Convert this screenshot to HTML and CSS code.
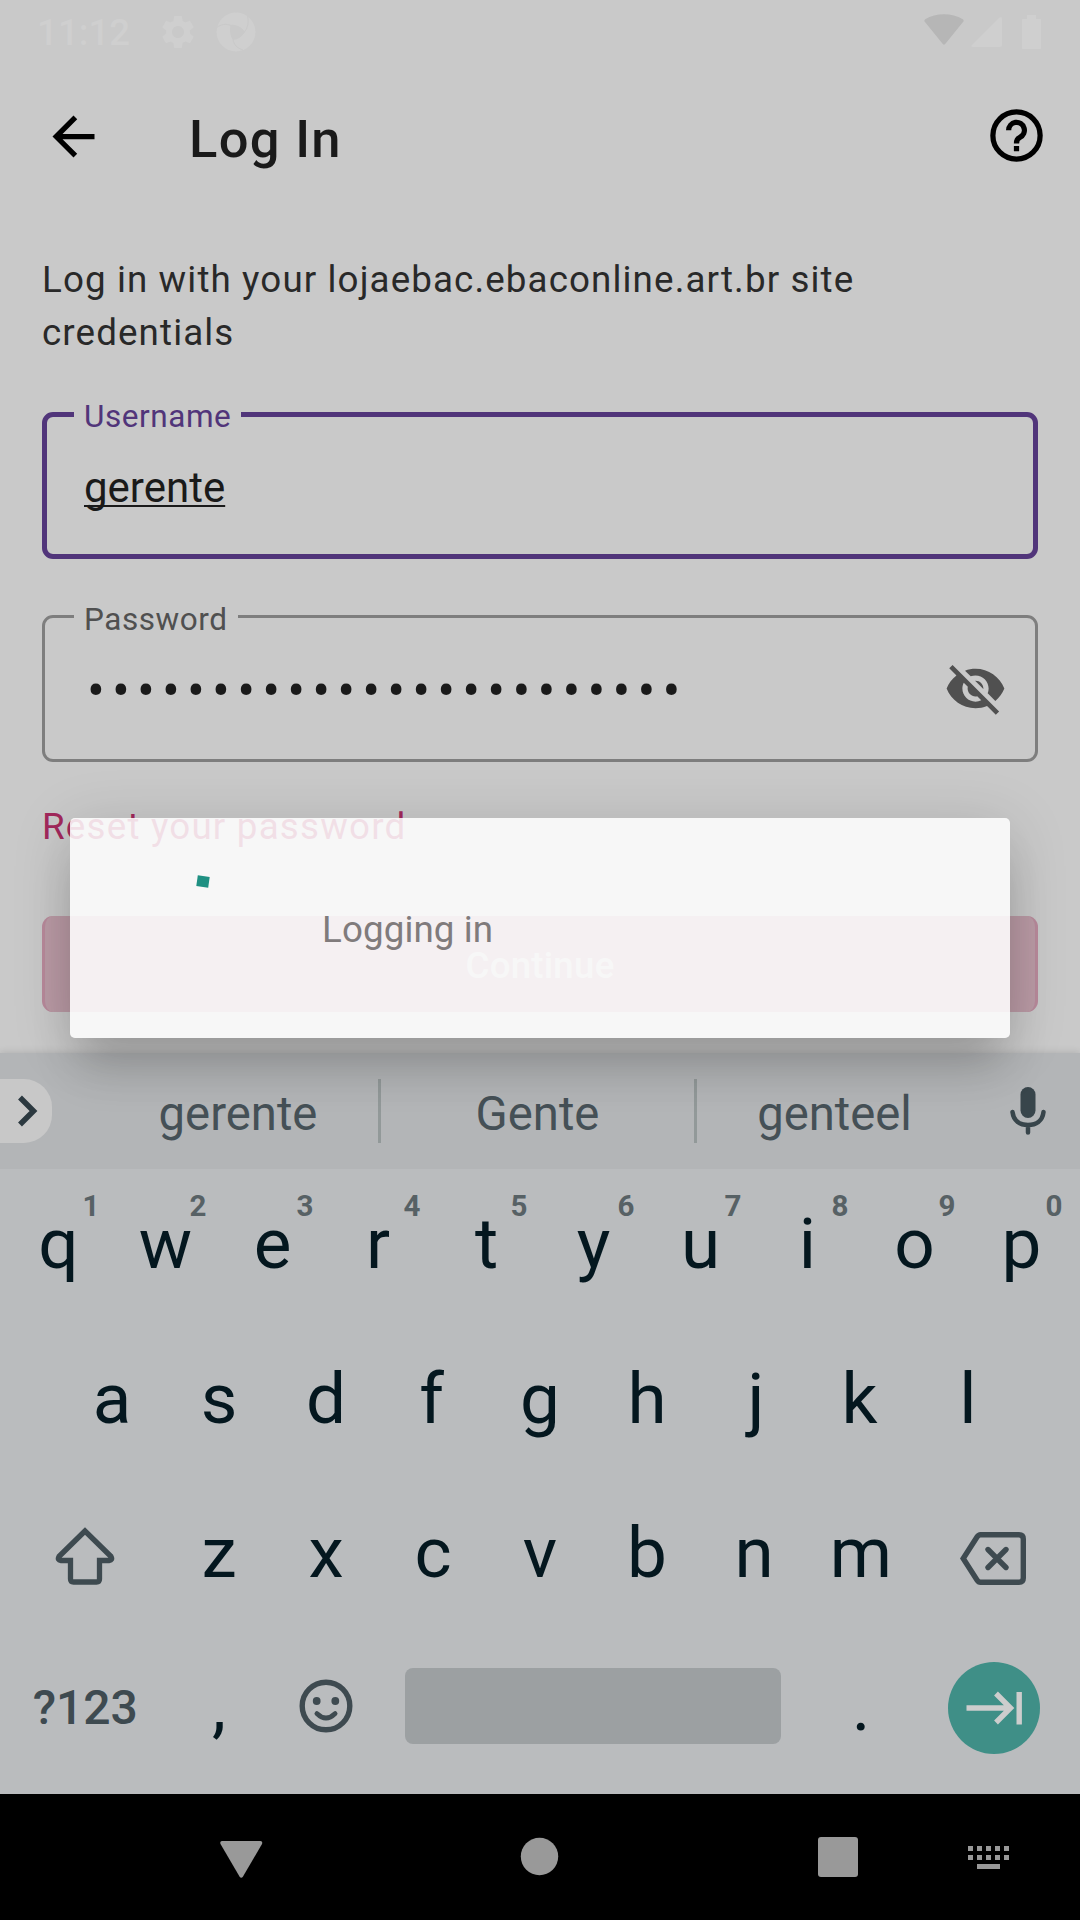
FILE: index.html
```html
<!DOCTYPE html>
<html lang="en">
<head>
<meta charset="utf-8">
<title>Log In</title>
<link rel="stylesheet" href="styles.css">
</head>
<body>
<div class="screen">
  <header class="status">
    <span class="clock">11:12</span>
    <svg class="gear" width="40" height="40" viewBox="0 0 24 24"><path fill="currentColor" d="M19.14 12.94c.04-.3.06-.61.06-.94 0-.32-.02-.64-.07-.94l2.03-1.58c.18-.14.23-.41.12-.61l-1.92-3.32c-.12-.22-.37-.29-.59-.22l-2.39.96c-.5-.38-1.03-.7-1.62-.94l-.36-2.54c-.04-.24-.24-.41-.48-.41h-3.84c-.24 0-.43.17-.47.41l-.36 2.54c-.59.24-1.13.57-1.62.94l-2.39-.96c-.22-.08-.47 0-.59.22L2.74 8.87c-.12.21-.08.47.12.61l2.03 1.58c-.05.3-.09.63-.09.94s.02.64.07.94l-2.03 1.58c-.18.14-.23.41-.12.61l1.92 3.32c.12.22.37.29.59.22l2.39-.96c.5.38 1.03.7 1.62.94l.36 2.54c.05.24.24.41.48.41h3.84c.24 0 .44-.17.47-.41l.36-2.54c.59-.24 1.13-.56 1.62-.94l2.39.96c.22.08.47 0 .59-.22l1.92-3.32c.12-.22.07-.47-.12-.61l-2.01-1.58zM12 15.6c-1.98 0-3.6-1.62-3.6-3.6s1.62-3.6 3.6-3.6 3.6 1.62 3.6 3.6-1.62 3.6-3.6 3.6z"/></svg>
    <svg class="swirl" width="40" height="40" viewBox="0 0 40 40"><circle cx="20" cy="20" r="19.5" fill="currentColor"/><g fill="#c9c9c9" stroke="#c9c9c9" stroke-linejoin="round"><path d="M15 13.500C20 13 25 15 28.500 20C25 25 22 26.500 17 27.500C14.500 23 14 18 15 13.500Z"/><path fill="none" stroke-width="1" d="M0 16C5 12 10 11.500 15 13.500M31.500 4C33 10 32 15 28.500 20M27 38C21 36 18 33 17 27.500"/></g></svg>
    <svg class="wifi" width="40" height="32" viewBox="0 0 40 32"><path d="M1 8C0 7 .2 6 1.200 5.300C12 -1.500 28 -1.500 38.800 5.300C39.800 6 40 7 39 8L21.200 30Q20 31.500 18.800 30Z" fill="#b6b6b6"/></svg>
    <svg class="signal" width="32" height="32" viewBox="0 0 32 32"><path d="M1 29L28.500 1.500Q31 0 31 2.500V29Q31 31 29 31H2Q-.5 31 1 29Z" fill="currentColor"/></svg>
    <svg class="battery" width="19" height="34" viewBox="0 0 19 34"><path d="M5 0h9v4h4q1 0 1 1v28q0 1-1 1H1q-1 0-1-1V5q0-1 1-1h4z" fill="currentColor"/></svg>
  </header>

  <div class="appbar">
    <svg class="back" width="63" height="63" viewBox="0 0 24 24"><path d="M20 11H7.830l5.590-5.590L12 4l-8 8 8 8 1.410-1.410L7.830 13H20v-2z"/></svg>
    <h1 class="title">Log In</h1>
    <svg class="help" width="63" height="63" viewBox="0 0 24 24"><circle cx="12" cy="12" r="9" fill="none" stroke="#000" stroke-width="2"/><path d="M9 10a3 3 0 1 1 4.300 2.700Q12 13.300 12 15" fill="none" stroke="#000" stroke-width="2"/><path d="M11 16h2v2h-2z"/></svg>
  </div>

  <main class="form">
    <p class="intro">Log in with your lojaebac.ebaconline.art.br site<br>credentials</p>
    <div class="field focused">
      <span class="label">Username</span>
      <span class="value">gerente</span>
    </div>
    <div class="field">
      <span class="label">Password</span>
      <span class="dots">••••••••••••••••••••••••</span>
      <svg class="eye" width="63" height="63" viewBox="0 0 24 24"><path fill="#505050" d="M12 7c2.760 0 5 2.240 5 5 0 .65-.13 1.260-.36 1.830l2.920 2.920c1.510-1.260 2.700-2.890 3.430-4.750-1.730-4.390-6-7.500-11-7.500-1.400 0-2.740.25-3.980.7l2.160 2.160C10.740 7.130 11.350 7 12 7zM2 4.270l2.280 2.280.46.46C3.080 8.300 1.780 10.020 1 12c1.730 4.390 6 7.500 11 7.500 1.550 0 3.030-.3 4.380-.84l.42.42L19.730 22 21 20.730 3.270 3 2 4.270zM7.530 9.800l1.550 1.550c-.05.21-.08.43-.08.65 0 1.660 1.340 3 3 3 .22 0 .44-.03.65-.08l1.550 1.550c-.67.33-1.410.53-2.200.53-2.760 0-5-2.240-5-5 0-.79.2-1.530.53-2.200zm4.310-.78l3.150 3.150.02-.16c0-1.660-1.340-3-3-3l-.17.01z"/></svg>
    </div>
    <a class="reset">Reset your password</a>
    <div class="button">Continue</div>
  </main>

  <section class="keyboard">
    <div class="strip">
      <div class="expand"><svg width="22" height="34" viewBox="0 0 22 34"><path d="M3 3.500L16.500 17L3 30.500" fill="none" stroke="#2c3940" stroke-width="5.500"/></svg></div>
      <div class="word first">gerente</div>
      <div class="word">Gente</div>
      <div class="word last">genteel</div>
      <svg class="mic" width="36" height="48" viewBox="0 0 36 48" stroke="#38454b" fill="none"><rect x="10.500" y="0" width="15" height="31" rx="7.500" fill="#38454b" stroke="none"/><path d="M2.500 25C3.500 34 10 38 18 38S32.500 34 33.500 25M18 38V45.500" stroke-width="4.500" stroke-linecap="round"/></svg>
    </div>
    <div class="keys">
      <div class="row">
        <div class="key">q<sup>1</sup></div><div class="key">w<sup>2</sup></div><div class="key">e<sup>3</sup></div><div class="key narrow">r<sup>4</sup></div><div class="key">t<sup>5</sup></div><div class="key">y<sup>6</sup></div><div class="key">u<sup>7</sup></div><div class="key">i<sup>8</sup></div><div class="key">o<sup>9</sup></div><div class="key">p<sup>0</sup></div>
      </div>
      <div class="row">
        <div class="key">a</div><div class="key">s</div><div class="key">d</div><div class="key narrow">f</div><div class="key">g</div><div class="key">h</div><div class="key hooked">j</div><div class="key narrow">k</div><div class="key">l</div>
      </div>
      <div class="row">
        <div class="key wide shift"><svg width="60" height="58" viewBox="0 0 60 58"><path d="M30 4L4 29.500Q2 33 6 33.500H15.500V52Q15.500 55 18.500 55H41.500Q44.500 55 44.500 52V33.500H54Q58 33 56 29.500Z" fill="none" stroke="#3e4a50" stroke-width="5.300"/></svg></div>
        <div class="key">z</div><div class="key">x</div><div class="key">c</div><div class="key">v</div><div class="key">b</div><div class="key">n</div><div class="key">m</div>
        <div class="key wide erase"><svg width="66" height="53" viewBox="0 0 66 53"><path d="M20.500 2.700H59Q63.300 2.700 63.300 7V46Q63.300 50.300 59 50.300H20.500Q18.500 50.300 17 48L3.200 26.500L17 5Q18.500 2.700 20.500 2.700Z" fill="none" stroke="#3e4a50" stroke-width="5.400"/><path d="M28 17.500L46 35.500M46 17.500L28 35.500" stroke="#3e4a50" stroke-width="5.400" stroke-linecap="round"/></svg></div>
      </div>
      <div class="row">
        <div class="key wide symbols">?123</div>
        <div class="key mark">,</div>
        <div class="key emoji"><svg width="54" height="54" viewBox="0 0 54 54"><g fill="none" stroke="#3e4a50"><circle cx="27" cy="27" r="23.800" stroke-width="5.400"/><path d="M17.800 34.500Q27 43.500 36.200 34.500" stroke-width="4.600" stroke-linecap="round"/></g><circle cx="17.700" cy="22" r="3.900" fill="#3e4a50"/><circle cx="36.300" cy="22" r="3.900" fill="#3e4a50"/></svg></div>
        <div class="space"></div>
        <div class="key mark">.</div>
        <div class="key wide enter"><div class="next"><svg width="56" height="34" viewBox="0 0 56 34" fill="none" stroke="#cdcdcd" stroke-width="5.400"><path d="M0.500 17H44M30 2.500L44.500 17L30 31.500M53.200 1V33.500"/></svg></div></div>
      </div>
    </div>
  </section>

  <nav class="nav">
    <svg width="1080" height="126" viewBox="0 0 1080 126" fill="#999"><path d="M222 47H260.500Q263 47.500 262 50L243 82.500Q241.200 85 239.500 82.500L220.500 50Q219.500 47.500 222 47Z"/><circle cx="539.500" cy="62.500" r="18.700"/><rect x="818" y="43" width="40" height="40" rx="3"/><path d="M968 52h5v5h-5zM977 52h5v5h-5zM986 52h5v5h-5zM995 52h5v5h-5zM1004 52h5v5h-5zM968 61h5v5h-5zM977 61h5v5h-5zM986 61h5v5h-5zM995 61h5v5h-5zM1004 61h5v5h-5zM977 70h23v5h-23z"/></svg>
  </nav>

  <div class="dialog">
    <div class="spinner"></div>
    <div class="message">Logging in</div>
  </div>
</div>
</body>
</html>
```
FILE: styles.css
```css
* { box-sizing: border-box; }
body { margin: 0; font-family: Roboto, sans-serif; background: #c9c9c9; }
svg { display: block; flex: none; }

.screen {
  position: relative;
  width: 1080px;
  height: 1920px;
  overflow: hidden;
  display: flex;
  flex-direction: column;
  background: #c9c9c9;
}

/* Status bar */
.status {
  height: 63px;
  display: flex;
  align-items: center;
  padding-left: 37px;
  color: #cfcfcf;
}
.clock { width: 121px; padding-top: 2px; font-size: 36.750px; font-weight: 500; }
.swirl { margin-left: 18px; }
.wifi { margin: 0 7px 3px auto; }
.signal { margin-right: 19px; }
.battery { margin-right: 39px; }

/* App bar */
.appbar {
  height: 147px;
  display: flex;
  align-items: center;
  padding: 0 32px 0 42px;
}
.title {
  margin: 0 auto 0 84px;
  padding-top: 4px;
  font-size: 52.500px;
  font-weight: 500;
  letter-spacing: 1.300px;
  color: #1a1a1a;
}
.help { margin-bottom: 2px; }

/* Form */
.form {
  display: flex;
  flex-direction: column;
  padding: 43px 42px 0;
}
.intro {
  margin: 0 0 53px;
  font-size: 36.750px;
  line-height: 53px;
  letter-spacing: 1.110px;
  white-space: nowrap;
  color: #292929;
}
.field {
  position: relative;
  height: 147px;
  display: flex;
  align-items: center;
  justify-content: space-between;
  padding: 0 28px 0 39px;
  border: 3px solid #7e7e7e;
  border-radius: 11px;
}
.field.focused {
  margin-bottom: 56px;
  padding-left: 37px;
  border: 5px solid #51357a;
}
.label {
  position: absolute;
  left: 29px;
  top: -18px;
  padding: 0 10px;
  font-size: 31.500px;
  line-height: 40px;
  letter-spacing: 0.550px;
  color: #505050;
  background: #c9c9c9;
}
.focused .label { left: 27px; top: -20px; color: #51357a; }
.value {
  padding-top: 4px;
  font-size: 42px;
  color: #1a1a1a;
  text-decoration: underline;
  text-decoration-thickness: 2px;
  text-decoration-skip-ink: none;
  text-underline-offset: 3px;
}
.dots {
  margin-left: 3px;
  padding-top: 5px;
  font-size: 53px;
  line-height: 60px;
  letter-spacing: 7.140px;
  color: #1a1a1a;
}
.reset {
  margin-top: 40px;
  font-size: 36.750px;
  line-height: 50px;
  letter-spacing: 1.200px;
  color: #a1285b;
}
.button {
  margin-top: 64px;
  height: 96px;
  border-radius: 11px;
  border: 0 solid #b98a9b;
  border-width: 0 3px;
  background: #bb9ba6;
  color: #c9c9c9;
  font-size: 36.750px;
  font-weight: 500;
  line-height: 99px;
  letter-spacing: 0.200px;
  text-align: center;
}

/* Keyboard */
.keyboard {
  height: 741px;
  margin-top: auto;
  background: #babcbe;
  box-shadow: 0 -1px 7px rgba(0, 0, 0, 0.120);
}
.strip {
  height: 116px;
  display: flex;
  align-items: center;
  background: #b3b5b7;
}
.expand {
  position: relative;
  z-index: 1;
  width: 52px;
  height: 64px;
  margin-right: 44px;
  display: flex;
  align-items: center;
  padding-left: 17px;
  border-radius: 0 28px 28px 0;
  background: #c8c8c8;
}
.word {
  width: 316px;
  height: 64px;
  padding-top: 3px;
  border-right: 3px solid #929999;
  font-size: 47.250px;
  line-height: 64px;
  text-align: center;
  color: #455056;
}
.word.first { width: 285px; padding-left: 2px; }
.word.last { width: 275px; border-right: 0; }
.mic { margin-left: 38px; }
.keys { display: flex; flex-direction: column; gap: 5.500px; padding: 0 5px; }
.row { display: flex; justify-content: center; align-items: center; height: 149px; }
.key {
  position: relative;
  width: 107px;
  height: 149px;
  display: flex;
  align-items: center;
  justify-content: center;
  font-size: 71px;
  line-height: 149px;
  color: #04171f;
}
.key.narrow { padding-right: 3px; }
.key.hooked { padding-left: 4px; }
.key.mark { padding-bottom: 4px; }
.key sup {
  position: absolute;
  left: 69px;
  top: 17px;
  width: 34px;
  font-size: 29.500px;
  font-weight: 700;
  line-height: 40px;
  text-align: center;
  color: #576165;
}
.wide { width: 160.500px; }
.shift { padding-top: 6px; }
.erase { padding: 11px 3px 0 0; }
.symbols { font-size: 48px; font-weight: 500; color: #3e4a50; }
.emoji { padding: 0 1px 3px 0; }
.space { width: 376px; height: 76px; margin: 0 27px 2px 25px; border-radius: 8px; background: #9ca0a2; }
.enter { padding: 2px 2px 0 0; }
.next {
  width: 92px;
  height: 92px;
  display: flex;
  align-items: center;
  justify-content: center;
  border-radius: 50%;
  background: #3f8f87;
}

/* Navigation bar */
.nav { height: 126px; background: #000; }

/* Progress dialog */
.dialog {
  position: absolute;
  left: 70px;
  top: 818px;
  width: 940px;
  height: 220px;
  display: flex;
  padding-top: 57px;
  border-radius: 5px;
  background: rgba(255, 255, 255, 0.850);
  box-shadow: 0 38px 44px -8px rgba(0, 0, 0, 0.160), 0 8px 60px rgba(0, 0, 0, 0.150);
}
.spinner {
  width: 12px;
  height: 11px;
  margin: 1px 0 0 127px;
  background: #1f9082;
  transform: rotate(8deg);
}
.message {
  margin: 33px 0 0 113px;
  font-size: 36.750px;
  line-height: 43px;
  letter-spacing: 0.100px;
  color: #807b7c;
}
```
